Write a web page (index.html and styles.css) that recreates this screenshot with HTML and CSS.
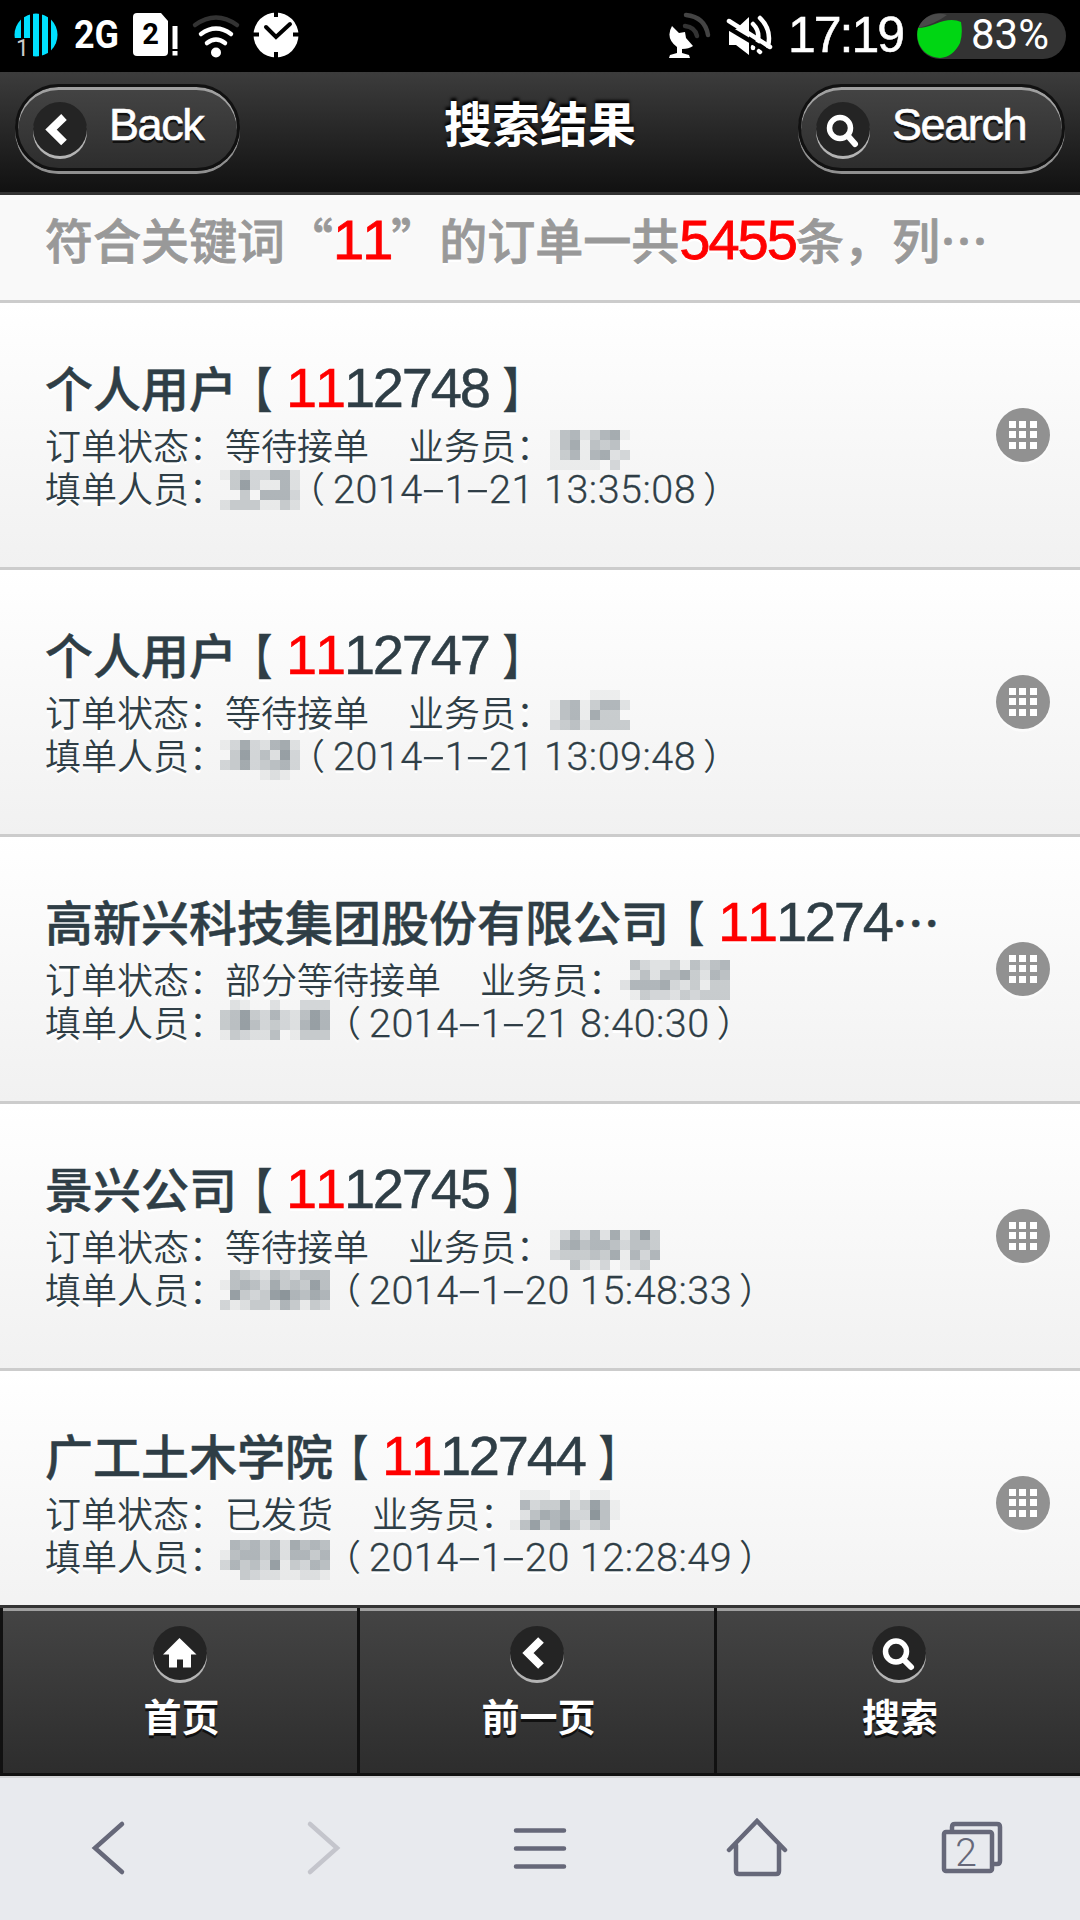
FILE: index.html
```html
<!DOCTYPE html>
<html lang="zh-CN">
<head>
  <meta charset="UTF-8">
  <title>搜索结果</title>
  <link rel="stylesheet" href="styles.css">
</head>
<body>
  <!-- Status bar -->
  <div class="status">
    <svg class="status-icons" width="320" height="72" viewBox="0 0 320 72">
      <defs>
        <clipPath id="disc"><circle cx="36" cy="35" r="21.5"/></clipPath>
      </defs>
      <g clip-path="url(#disc)" fill="#00e0ff">
        <rect x="14" y="12" width="7" height="26"/>
        <rect x="24" y="12" width="6" height="26"/>
        <rect x="33" y="12" width="6" height="46"/>
        <rect x="42" y="12" width="6" height="46"/>
        <rect x="51" y="12" width="7" height="46"/>
      </g>
      <text class="slot" x="16" y="56">1</text>
      <text class="net" x="74" y="48" textLength="45" lengthAdjust="spacingAndGlyphs">2G</text>
      <path d="M137 13h24l7 8v31a4 4 0 0 1-4 4h-27a4 4 0 0 1-4-4V17a4 4 0 0 1 4-4z" fill="#fff"/>
      <text class="sim" x="150.5" y="44" text-anchor="middle">2</text>
      <rect x="172.5" y="26" width="5" height="23" fill="#fff"/>
      <rect x="172.5" y="51" width="5" height="4.5" fill="#fff"/>
      <g fill="none" stroke="#fff" stroke-width="4.5" stroke-linecap="round">
        <path d="M195 25q21-15 42 0" stroke="#333"/>
        <path d="M201 34q15-11 30 0"/>
        <path d="M207 43q9-7 18 0"/>
      </g>
      <circle cx="216" cy="52.5" r="5" fill="#fff"/>
      <circle cx="276" cy="35" r="22.5" fill="#fff"/>
      <path d="M276 12v5M276 52v6M253 34.5h6M293 34.5h6" stroke="#000" stroke-width="4"/>
      <path d="M266 27l10 10 14-13" fill="none" stroke="#000" stroke-width="4" stroke-linecap="round"/>
    </svg>
    <div class="status-right">
      <svg width="110" height="72" viewBox="668 0 110 72">
        <path d="M673 26l7 7 6-1 1 6 7 8q-4 3-11 3v4l7 2 1 3h-21l1-3 7-2v-6q-12-9-5-21z" fill="#fff"/>
        <path d="M686 26q10 1 12 10" fill="none" stroke="#333" stroke-width="4.5" stroke-linecap="round"/>
        <path d="M687 15q19 2 22 20" fill="none" stroke="#444" stroke-width="4.5" stroke-linecap="round"/>
        <path d="M730 29h7l13-12v38l-13-10h-7z" fill="#fff"/>
        <path d="M754 24q8 8 4 20M761 18q12 12 8 28M754 47v1M760 51l1 1" fill="none" stroke="#fff" stroke-width="4.5" stroke-linecap="round"/>
        <path d="M728 27l42 25" stroke="#000" stroke-width="4.5"/>
        <path d="M730 21l41 26" stroke="#fff" stroke-width="4.5" stroke-linecap="round"/>
      </svg>
      <span class="clock">17:19</span>
      <div class="battery">
        <svg width="46" height="46" viewBox="0 0 46 46">
          <path d="M1 15A23 23 0 0 1 30 2Q18 11 1 15z" fill="#4a4a4a"/>
          <path d="M1 15Q8 15 18 11 34 4 44 9q2 12-1 21-7 14-20 15Q8 44 2 31-1 23 1 15z" fill="#00d613"/>
        </svg>
        <span>83%</span>
      </div>
    </div>
  </div>

  <!-- Header -->
  <header class="header">
    <a class="btn">
      <span class="icon"><svg width="54" height="54" viewBox="0 0 54 54"><path d="M31 15L18 27.5l13 13" fill="none" stroke="#fff" stroke-width="8"/></svg></span>
      <span class="btn-text">Back</span>
    </a>
    <h1>搜索结果</h1>
    <a class="btn">
      <span class="icon"><svg width="54" height="54" viewBox="0 0 54 54"><g fill="none" stroke="#fff"><circle cx="24" cy="26" r="10.5" stroke-width="5.5"/><path d="M32 34l7 8" stroke-width="6" stroke-linecap="round"/></g></svg></span>
      <span class="btn-text">Search</span>
    </a>
  </header>

  <!-- Results -->
  <main class="list">
    <div class="divider">符合关键词“<b class="num">11</b>”的订单一共<b class="num">5455</b>条，列…</div>

    <div class="item">
      <div class="info">
        <h3>个人用户<i class="lb">【</i><span class="num"><b>11</b>12748</span><i class="rb">】</i></h3>
        <p>订单状态：等待接单　<span class="label">业务员：</span><span class="name" data-x="0" data-y="5" data-rows="15624671 15715450 14616723 11111030"></span></p>
        <p>填单人员：<span class="name n2" data-x="-6" data-y="2" data-rows="14533662 04831162 00406663 24441142"></span><i class="lp">（</i><span class="num">2014<u>-</u>1<u>-</u>21 13:35:08</span><i class="rp">）</i></p>
      </div>
      <span class="grid"></span>
    </div>

    <div class="item">
      <div class="info">
        <h3>个人用户<i class="lb">【</i><span class="num"><b>11</b>12747</span><i class="rb">】</i></h3>
        <p>订单状态：等待接单　<span class="label">业务员：</span><span class="name" data-x="0" data-y="-2" data-rows="00001110 15614662 15617440 34524444"></span></p>
        <p>填单人员：<span class="name n2" data-x="-6" data-y="5" data-rows="13732672 04835283 34734563 00001210"></span><i class="lp">（</i><span class="num">2014<u>-</u>1<u>-</u>21 13:09:48</span><i class="rp">）</i></p>
      </div>
      <span class="grid"></span>
    </div>

    <div class="item">
      <div class="info">
        <h3>高新兴科技集团股份有限公司<i class="lb">【</i><span class="num"><b>11</b>1274</span>…</h3>
        <p>订单状态：部分等待接单　<span class="label">业务员：</span><span class="name" data-x="-2" data-y="1" data-rows="05322415356 02525574265 26667324144 01433243444"></span></p>
        <p>填单人员：<span class="name n3" data-x="-6" data-y="-2" data-rows="02100200333 45843632586 45853432686 14322501444"></span><i class="lp">（</i><span class="num">2014<u>-</u>1<u>-</u>21 8:40:30</span><i class="rp">）</i></p>
      </div>
      <span class="grid"></span>
    </div>

    <div class="item">
      <div class="info">
        <h3>景兴公司<i class="lb">【</i><span class="num"><b>11</b>12745</span><i class="rb">】</i></h3>
        <p>订单状态：等待接单　<span class="label">业务员：</span><span class="name" data-x="0" data-y="4" data-rows="13636272584 16756653554 34445471636 00521301340"></span></p>
        <p>填单人员：<span class="name n3" data-x="-6" data-y="1" data-rows="05432543555 15653745485 08434896576 31244264143"></span><i class="lp">（</i><span class="num">2014<u>-</u>1<u>-</u>20 15:48:33</span><i class="rp">）</i></p>
      </div>
      <span class="grid"></span>
    </div>

    <div class="item">
      <div class="info">
        <h3>广工土木学院<i class="lb">【</i><span class="num"><b>11</b>12744</span><i class="rb">】</i></h3>
        <p>订单状态：已发货　<span class="label">业务员：</span><span class="name" data-x="-4" data-y="-3" data-rows="01110010110 06344724851 02576733951 15846842450"></span></p>
        <p>填单人员：<span class="name n3" data-x="-6" data-y="4" data-rows="06564627565 15664626646 36453814365 00432211221"></span><i class="lp">（</i><span class="num">2014<u>-</u>1<u>-</u>20 12:28:49</span><i class="rp">）</i></p>
      </div>
      <span class="grid"></span>
    </div>
  </main>

  <!-- Page navigation -->
  <nav class="tabs">
    <a class="tab">
      <span class="icon"><svg width="54" height="54" viewBox="0 0 54 54"><path d="M26.5 12l17 16.5h-5.5v13h-8v-8h-6v8h-8v-13h-6z" fill="#fff"/></svg></span>
      <span class="tab-text">首页</span>
    </a>
    <a class="tab">
      <span class="icon"><svg width="54" height="54" viewBox="0 0 54 54"><path d="M31 14L18 27l13 13" fill="none" stroke="#fff" stroke-width="8"/></svg></span>
      <span class="tab-text">前一页</span>
    </a>
    <a class="tab">
      <span class="icon"><svg width="54" height="54" viewBox="0 0 54 54"><g fill="none" stroke="#fff"><circle cx="24" cy="25.5" r="10.5" stroke-width="5.5"/><path d="M32 34l7 7" stroke-width="6" stroke-linecap="round"/></g></svg></span>
      <span class="tab-text">搜索</span>
    </a>
  </nav>

  <!-- Browser toolbar -->
  <div class="toolbar">
    <svg viewBox="0 0 72 72"><path d="M50 11L23 35l27 24"/></svg>
    <svg class="off" viewBox="0 0 72 72"><path d="M22 11l27 24-27 24"/></svg>
    <svg viewBox="0 0 72 72"><path d="M12 17.5h48M12 35.5h48M12 53.5h48"/></svg>
    <svg viewBox="0 0 72 72"><path d="M9 37L37 8l28 29M16 32v26q0 3 3 3h37q3 0 3-3V32"/></svg>
    <svg viewBox="0 0 72 72"><rect x="8" y="19" width="48" height="39" rx="2"/><path d="M16 18v-4q0-3 3-3h42q3 0 3 3v34q0 3-3 3h-4"/><text x="30" y="53" text-anchor="middle">2</text></svg>
  </div>

  <script>
    // fill the masked names with 10px blocks, one digit per block
    document.querySelectorAll('.name').forEach((name) => {
      const ns = 'http://www.w3.org/2000/svg';
      const svg = document.createElementNS(ns, 'svg');
      name.dataset.rows.split(' ').forEach((row, r) => {
        [...row].forEach((level, c) => {
          const rect = document.createElementNS(ns, 'rect');
          rect.setAttribute('x', c * 10 + Number(name.dataset.x));
          rect.setAttribute('y', r * 10 + Number(name.dataset.y));
          rect.setAttribute('width', 10);
          rect.setAttribute('height', 10);
          rect.setAttribute('fill-opacity', level * 0.068);
          svg.appendChild(rect);
        });
      });
      name.appendChild(svg);
    });
  </script>
</body>
</html>
```
FILE: styles.css
```css
* {
  box-sizing: border-box;
}

body {
  margin: 0;
  width: 1080px;
  height: 1920px;
  display: flex;
  flex-direction: column;
  overflow: hidden;
  background: #f9f9f9;
  font-family: "Noto Sans CJK SC", sans-serif;
}

h1, h3, p {
  margin: 0;
}

i {
  font-style: normal;
}

/* === Status bar === */
.status {
  flex: none;
  display: flex;
  justify-content: space-between;
  height: 72px;
  padding-right: 14px;
  background: #000;
  color: #fff;
  font-family: "Liberation Sans", sans-serif;
}

.status-right {
  display: flex;
  align-items: center;
}

.slot {
  font: 23px Roboto, sans-serif;
  fill: #ccc;
}

.net {
  font: bold 38px Roboto, sans-serif;
  fill: #fff;
}

.sim {
  font: bold 29px Roboto, sans-serif;
  fill: #000;
}

.clock {
  width: 129px;
  margin: -2px 0 0 11px;
  font-size: 50px;
  line-height: 68px;
  letter-spacing: -2px;
  -webkit-text-stroke: .5px #fff;
}

.battery {
  display: flex;
  align-items: center;
  width: 149px;
  height: 46px;
  border-radius: 23px;
  background: #333;
  font: 42px Roboto, sans-serif;
}

.battery span {
  margin: -4px 0 0 8px;
}

/* === Header === */
.header {
  flex: none;
  display: grid;
  grid-template-columns: 225px 1fr 267px;
  height: 123px;
  padding: 12px 15px 0;
  border-bottom: 3px solid #333;
  background: linear-gradient(#3c3c3c, #111);
  color: #fff;
}

.header h1 {
  padding-left: 42px;
  text-align: center;
  font-size: 48px;
  font-weight: 700;
  line-height: 75px;
  text-shadow: 0 -3px 3px #000;
}

.btn {
  display: flex;
  height: 87px;
  padding: 15px 0 0 15px;
  border: 3px solid #111;
  border-radius: 44px;
  background: linear-gradient(#444, #2d2d2d);
  box-shadow: inset 0 3px 0 #a0a0a0, 0 3px 0 #909090;
}

.icon {
  flex: none;
  width: 54px;
  height: 54px;
  border-radius: 50%;
  background: #242424;
  box-shadow: 0 3px 0 #b4b4b4;
}

.icon svg {
  display: block;
}

.btn-text {
  margin-left: 22px;
  font: 45px/46px "Liberation Sans", sans-serif;
  letter-spacing: -1.4px;
  text-shadow: 0 3px 0 #111;
  -webkit-text-stroke: .6px #fff;
}

/* === Results === */
.list {
  flex: 1;
  min-height: 0;
  overflow: hidden;
}

.divider {
  height: 108px;
  padding: 7px 45px 0;
  border-bottom: 3px solid #ccc;
  background: #f9f9f9;
  color: #999;
  font-size: 48px;
  font-weight: 500;
  line-height: 72px;
  white-space: nowrap;
  text-shadow: 0 3px 0 #fff;
  -webkit-text-stroke: .8px;
}

.num {
  font-family: "Liberation Sans", sans-serif;
  font-size: 56px;
  font-weight: 400;
  font-kerning: none;
  line-height: 0;
  letter-spacing: -2px;
}

b {
  color: #f00;
  font-weight: 400;
}

.item {
  display: flex;
  justify-content: space-between;
  height: 267px;
  padding: 53px 30px 0 45px;
  border-bottom: 3px solid #ccc;
  background: linear-gradient(#fff, #f1f1f1);
  color: #2f3e46;
  text-shadow: 0 3px 0 #fff;
  white-space: nowrap;
}

.item h3 {
  height: 67px;
  font-size: 48px;
  font-weight: 500;
  line-height: 60px;
  -webkit-text-stroke: .5px;
}

.item h3 .num {
  margin-left: 1px;
  letter-spacing: -2.2px;
}

.item p {
  height: 43px;
  font-size: 36px;
  font-weight: 350;
  line-height: 43px;
}

.item p .num {
  font-family: Roboto, sans-serif;
  font-size: 39.5px;
  font-weight: 300;
  letter-spacing: .5px;
  -webkit-text-stroke: .3px;
}

/* hyphens are as wide as a digit */
.item u {
  display: inline-block;
  width: 22px;
  text-align: center;
  text-decoration: none;
  transform: scaleX(2);
}

/* brackets sit in the middle of their cell */
.lb, .rb, .lp, .rp {
  display: inline-block;
}

.lb { transform: translateX(-8px) scaleX(.8); }
.rb { transform: translateX(9px) scaleX(.8); }
.lp { transform: translateX(-8px); }
.rp { transform: translateX(7px); }

.label {
  margin: 0 -3px 0 3px;
}

.name {
  display: inline-block;
  height: 43px;
  margin: 0 -1px 0 1px;
  vertical-align: top;
}

.name svg {
  display: block;
  width: 1px;
  height: 1px;
  margin-top: 2px;
  overflow: visible;
  fill: #4a5861;
}

.n2 { width: 72px; }
.n3 { width: 108px; }

.grid {
  flex: none;
  width: 54px;
  height: 54px;
  margin-top: 52px;
  padding: 13px 0 0 13px;
  border-radius: 50%;
  background: #919191;
  box-shadow: 0 3px 0 rgba(255, 255, 255, .5);
}

/* 3x3 squares */
.grid::before {
  content: "";
  display: block;
  width: 7px;
  height: 7px;
  background: #fff;
  box-shadow: 10px 0 #fff, 21px 0 #fff,
    0 10px #fff, 10px 10px #fff, 21px 10px #fff,
    0 21px #fff, 10px 21px #fff, 21px 21px #fff;
}

/* === Page navigation === */
.tabs {
  flex: none;
  display: grid;
  grid-template-columns: 357px 357px 366px;
  height: 171px;
  border-top: 3px solid #333;
  border-bottom: 3px solid #111;
}

.tab {
  display: flex;
  flex-direction: column;
  align-items: center;
  padding-top: 18px;
  border-left: 3px solid #111;
  background: linear-gradient(#444, #2d2d2d);
  box-shadow: inset 0 3px 0 #a0a0a0;
  color: #fff;
  font-size: 38px;
  font-weight: 700;
  line-height: 50px;
  text-shadow: 0 3px 0 #111;
}

.tab .icon {
  margin-bottom: 10px;
}

.tab-text {
  padding-left: 3px;
}

/* === Browser toolbar === */
.toolbar {
  flex: none;
  display: grid;
  grid-template-columns: repeat(5, 216px);
  place-items: center;
  height: 144px;
  border-top: 2px solid #d3d4d6;
  background: #e8eaee;
}

.toolbar svg {
  width: 72px;
  height: 72px;
  fill: none;
  stroke: #666879;
  stroke-width: 4.5;
  stroke-linecap: round;
}

.toolbar .off {
  stroke: #c4c5cc;
}

.toolbar text {
  font: 300 39px Roboto, sans-serif;
  fill: #666879;
  stroke: none;
}
```
